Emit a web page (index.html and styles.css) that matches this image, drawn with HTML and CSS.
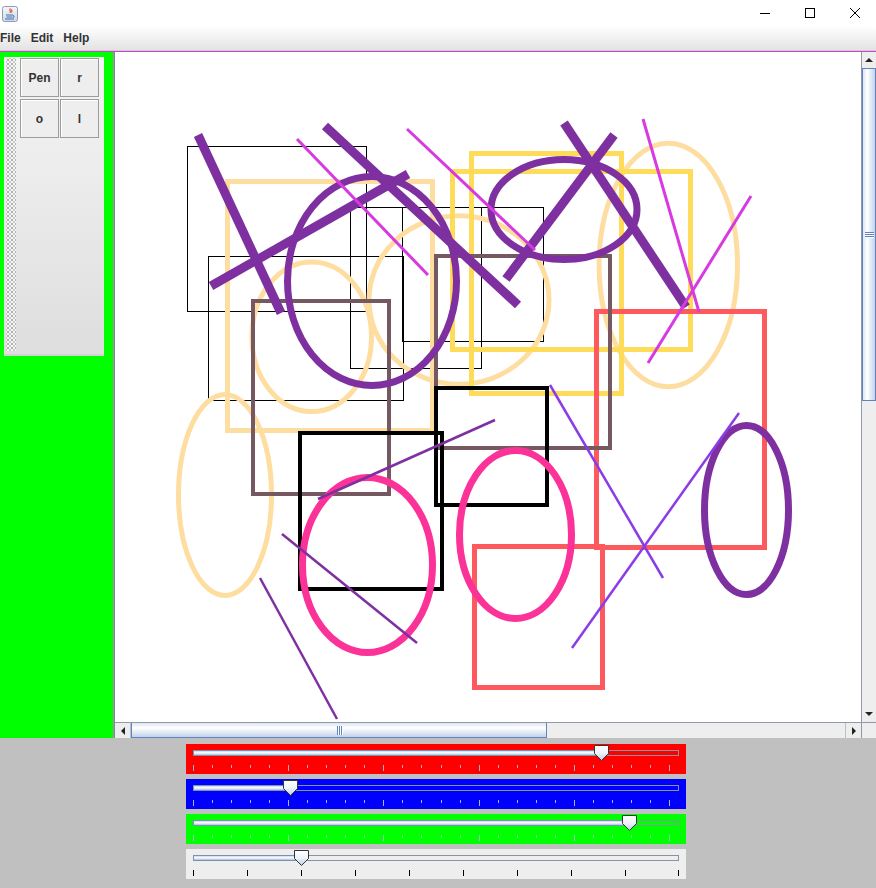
FILE: index.html
```html
<!DOCTYPE html>
<html>
<head>
<meta charset="utf-8">
<title>Paint</title>
<link rel="stylesheet" href="styles.css">
</head>
<body>
<svg class="defs" width="0" height="0">
  <defs>
    <linearGradient id="thumbGrad" x1="0" y1="0" x2="0" y2="1">
      <stop offset="0" stop-color="#ffffff"/>
      <stop offset="0.5" stop-color="#eef3fa"/>
      <stop offset="1" stop-color="#b9cce6"/>
    </linearGradient>
    <linearGradient id="iconGrad" x1="0" y1="0" x2="0" y2="1">
      <stop offset="0" stop-color="#f4f7fb"/>
      <stop offset="1" stop-color="#cfd9e6"/>
    </linearGradient>
    <path id="thumbShape" d="M0.5 0.5H14.5V8.5L7.5 15.5L0.5 8.5Z"/>
  </defs>
</svg>

<div class="titlebar">
  <svg class="app-icon" width="16" height="16" viewBox="0 0 16 16">
    <rect x="0.5" y="0.5" width="15" height="15" rx="2" fill="url(#iconGrad)" stroke="#8e9db3"/>
    <path d="M8.5 2.5c-2 1.5 1 2.5-0.5 4.5M10 3.5c-1 1 0.5 1.5-0.5 3" stroke="#e0542a" stroke-width="1.2" fill="none"/>
    <path d="M4 9h7M4.5 11h6M3 13h9" stroke="#3b6fb6" stroke-width="1" fill="none"/>
    <path d="M11 9.5c1.5 0 1.5 2 0 2" stroke="#3b6fb6" stroke-width="1" fill="none"/>
  </svg>
  <div class="win-controls">
    <svg width="10" height="10" viewBox="0 0 10 10"><path d="M0 5.5H10" stroke="#000" stroke-width="1"/></svg>
    <svg width="10" height="10" viewBox="0 0 10 10"><rect x="0.5" y="0.5" width="9" height="9" fill="none" stroke="#000"/></svg>
    <svg width="10" height="10" viewBox="0 0 10 10"><path d="M0 0L10 10M10 0L0 10" stroke="#000" stroke-width="1"/></svg>
  </div>
</div>

<div class="menubar">
  <span class="menu">File</span>
  <span class="menu">Edit</span>
  <span class="menu">Help</span>
</div>
<div class="accent"></div>

<div class="main">
  <div class="side">
    <div class="toolbar">
      <div class="grip"></div>
      <div class="tools">
        <button class="tool">Pen</button>
        <button class="tool">r</button>
        <button class="tool">o</button>
        <button class="tool">l</button>
      </div>
    </div>
  </div>

  <div class="scrollpane">
    <div class="view-row">
      <div class="canvas">
        <svg class="drawing" width="746" height="670" viewBox="115 52 746 670">
          <g fill="none" stroke-linecap="butt">
            <g stroke="#000" stroke-width="1">
              <rect x="187.5" y="146.5" width="179" height="165"/>
              <rect x="208.5" y="256.5" width="195" height="144"/>
              <rect x="350.5" y="207.5" width="131" height="161"/>
              <rect x="402.5" y="207.5" width="141" height="134"/>
            </g>
            <rect x="227.5" y="181.5" width="205" height="249" stroke="#fedea0" stroke-width="5"/>
            <g stroke="#fedea0" stroke-width="5">
              <ellipse cx="311.7" cy="336.7" rx="59.8" ry="74.8"/>
              <ellipse cx="459" cy="300" rx="90" ry="84.2"/>
              <ellipse cx="668.3" cy="265" rx="69.2" ry="121.8"/>
              <ellipse cx="225" cy="495" rx="46.5" ry="100.5"/>
            </g>
            <g stroke="#ffdb5a" stroke-width="5">
              <rect x="471.5" y="153.5" width="150" height="240"/>
              <rect x="452.5" y="171.5" width="238" height="178"/>
            </g>
            <g stroke="#fe5a5e" stroke-width="5">
              <rect x="596.5" y="311.5" width="168" height="236"/>
              <rect x="474.5" y="546.5" width="128" height="141"/>
            </g>
            <g stroke="#765960" stroke-width="4">
              <rect x="253" y="301" width="136" height="193"/>
              <rect x="436" y="256" width="174" height="192"/>
            </g>
            <g stroke="#000" stroke-width="4">
              <rect x="300" y="433" width="142" height="156"/>
              <rect x="436" y="388" width="111" height="117"/>
            </g>
            <g stroke="#fb3399" stroke-width="7">
              <ellipse cx="367.5" cy="565" rx="65" ry="87.5"/>
              <ellipse cx="515.5" cy="534.5" rx="56" ry="84"/>
            </g>
            <g stroke="#7e30a0" stroke-width="7">
              <ellipse cx="372" cy="281" rx="84.5" ry="104.5"/>
              <ellipse cx="564" cy="209.5" rx="73" ry="50"/>
              <ellipse cx="746.5" cy="510" rx="42" ry="84.5"/>
            </g>
            <g stroke="#7e30a0" stroke-width="9">
              <line x1="198" y1="135" x2="281" y2="313"/>
              <line x1="211" y1="286" x2="408" y2="174"/>
              <line x1="325" y1="126" x2="518" y2="305"/>
              <line x1="564" y1="123" x2="686" y2="307"/>
              <line x1="614" y1="135" x2="506" y2="279"/>
            </g>
            <g stroke="#d63ae0" stroke-width="3">
              <line x1="297" y1="139" x2="428" y2="275"/>
              <line x1="407" y1="129" x2="535" y2="250"/>
              <line x1="643" y1="119" x2="699" y2="312"/>
              <line x1="751" y1="196" x2="648" y2="363"/>
            </g>
            <g stroke="#8a3ce6" stroke-width="2.5">
              <line x1="550" y1="385" x2="663" y2="578"/>
              <line x1="739" y1="413" x2="572" y2="648"/>
            </g>
            <g stroke="#7e30a0" stroke-width="2.5">
              <line x1="495" y1="420" x2="318" y2="499"/>
              <line x1="282" y1="534" x2="417" y2="643"/>
              <line x1="260" y1="578" x2="337" y2="719"/>
            </g>
          </g>
        </svg>
      </div>
      <div class="vscroll">
        <div class="sbtn"><span class="arrow-up"></span></div>
        <div class="vthumb"><span class="grip-h"></span><span class="grip-h"></span><span class="grip-h"></span></div>
        <div class="vtrack"></div>
        <div class="sbtn"><span class="arrow-down"></span></div>
      </div>
    </div>
    <div class="hscroll">
      <div class="hbtn"><span class="arrow-left"></span></div>
      <div class="hthumb"><span class="grip-v"></span><span class="grip-v"></span><span class="grip-v"></span></div>
      <div class="htrack"></div>
      <div class="hbtn right"><span class="arrow-right"></span></div>
      <div class="corner"></div>
    </div>
  </div>
</div>

<div class="controls-panel">
  <div class="slider red">
    <div class="track"><div class="filled" style="width:408px"></div><div class="empty"></div></div>
    <svg class="ticks" width="500" height="7"><use href="#colorTicks"/></svg>
    <svg class="thumb" style="left:408px" width="15" height="16"><use href="#thumbShape" fill="url(#thumbGrad)" stroke="#333"/></svg>
  </div>
  <div class="slider blue">
    <div class="track"><div class="filled" style="width:97px"></div><div class="empty"></div></div>
    <svg class="ticks" width="500" height="7">
      <g id="colorTicks" stroke="#a8b8ca" stroke-width="1">
        <path d="M7.5 0v6M26.5 0v3M45.5 0v3M64.5 0v3M83.5 0v3M102.5 0v6M121.5 0v3M140.5 0v3M159.5 0v3M178.5 0v3M197.5 0v6M216.5 0v3M235.5 0v3M255.5 0v3M274.5 0v3M293.5 0v6M312.5 0v3M331.5 0v3M350.5 0v3M369.5 0v3M388.5 0v6M407.5 0v3M426.5 0v3M445.5 0v3M464.5 0v3M483.5 0v6"/>
      </g>
    </svg>
    <svg class="thumb" style="left:97px" width="15" height="16"><use href="#thumbShape" fill="url(#thumbGrad)" stroke="#333"/></svg>
  </div>
  <div class="slider green">
    <div class="track"><div class="filled" style="width:436px"></div><div class="empty"></div></div>
    <svg class="ticks" width="500" height="7"><use href="#colorTicks"/></svg>
    <svg class="thumb" style="left:436px" width="15" height="16"><use href="#thumbShape" fill="url(#thumbGrad)" stroke="#333"/></svg>
  </div>
  <div class="slider gray">
    <div class="track"><div class="filled" style="width:108px"></div><div class="empty"></div></div>
    <svg class="ticks" width="500" height="7">
      <path d="M7.5 0v6M61.5 0v6M115.5 0v6M169.5 0v6M223.5 0v6M277.5 0v6M331.5 0v6M385.5 0v6M439.5 0v6M492.5 0v6" stroke="#000" stroke-width="1"/>
    </svg>
    <svg class="thumb" style="left:108px" width="15" height="16"><use href="#thumbShape" fill="url(#thumbGrad)" stroke="#333"/></svg>
  </div>
</div>
</body>
</html>
```

FILE: styles.css
```css
* { box-sizing: border-box; }
html, body { margin: 0; padding: 0; }
body {
  width: 876px;
  height: 888px;
  overflow: hidden;
  background: #ffffff;
  font-family: "Liberation Sans", Arial, sans-serif;
}
.defs { position: absolute; width: 0; height: 0; }

/* title bar */
.titlebar {
  height: 26px;
  display: flex;
  align-items: center;
  justify-content: space-between;
  background: #ffffff;
}
.app-icon { margin-left: 2px; margin-top: 1px; display: block; }
.win-controls {
  display: flex;
  align-items: center;
  gap: 35px;
  padding-right: 16px;
  margin-top: 0;
}
.win-controls svg { display: block; }

/* menu bar */
.menubar {
  height: 25px;
  padding-top: 1px;
  display: flex;
  gap: 10px;
  background: linear-gradient(#ffffff, #e3e3e3);
  border-bottom: 1px solid #cdcdcd;
  line-height: 23px;
  font-size: 12px;
  font-weight: bold;
  color: #333333;
}
.accent { height: 1px; background: #c944d0; }

/* main area */
.main { display: flex; height: 686px; }
.side {
  width: 114px;
  background: #00ff00;
  border-right: 1px solid #9a9a9a;
  padding: 5px 0 0 4px;
}
.toolbar {
  width: 100px;
  height: 299px;
  display: flex;
  gap: 4px;
  padding: 1px 0 3px 2px;
  background: linear-gradient(#f5f5f5, #dedede);
  border-bottom: 2px solid #d2d2d2;
}
.grip {
  width: 10px;
  background-color: #f6f6f6;
  background-image:
    radial-gradient(circle, #8a8a8a 0.6px, transparent 0.9px),
    radial-gradient(circle, #b0b0b0 0.6px, transparent 0.9px);
  background-size: 4px 4px, 4px 4px;
  background-position: 0 0, 2px 2px;
}
.tools {
  display: grid;
  grid-template-columns: 39px 39px;
  grid-auto-rows: 39px;
  column-gap: 1px;
  row-gap: 2px;
  align-content: start;
}
.tool {
  margin: 0;
  padding: 0;
  border: 1px solid #9c9c9c;
  background: #eeeeee;
  box-shadow: inset 1px 1px 0 #ffffff;
  font-family: "Liberation Sans", Arial, sans-serif;
  font-size: 12px;
  font-weight: bold;
  color: #333333;
}

.scrollpane {
  width: 762px;
  border-left: 1px solid #7a8a99;
  display: flex;
  flex-direction: column;
}
.view-row { display: flex; height: 670px; }
.canvas { width: 746px; height: 670px; background: #ffffff; overflow: hidden; }
.drawing { display: block; }

/* vertical scrollbar */
.vscroll {
  width: 15px;
  border-left: 1px solid #8f9aa6;
  display: flex;
  flex-direction: column;
  background: #eeeeee;
}
.sbtn {
  height: 16px;
  background: #eeeeee;
  display: flex;
  align-items: center;
  justify-content: center;
}
.arrow-up { width: 0; height: 0; border-left: 4px solid transparent; border-right: 4px solid transparent; border-bottom: 4px solid #222; }
.arrow-down { width: 0; height: 0; border-left: 4px solid transparent; border-right: 4px solid transparent; border-top: 4px solid #222; }
.arrow-left { width: 0; height: 0; border-top: 4px solid transparent; border-bottom: 4px solid transparent; border-right: 4px solid #222; }
.arrow-right { width: 0; height: 0; border-top: 4px solid transparent; border-bottom: 4px solid transparent; border-left: 4px solid #222; }
.vthumb {
  height: 333px;
  border: 1px solid #6382bf;
  background: linear-gradient(90deg, #dbe5f2, #ffffff 35%, #c2d3ea);
  display: flex;
  flex-direction: column;
  align-items: center;
  justify-content: center;
  gap: 1px;
}
.grip-h { width: 9px; height: 1px; background: #6382bf; box-shadow: 0 1px 0 #ffffff; }
.vtrack { flex: 1; background: #eeeeee; }

/* horizontal scrollbar */
.hscroll {
  height: 16px;
  display: flex;
  border-top: 1px solid #8f9aa6;
  background: #eeeeee;
}
.hbtn {
  width: 16px;
  display: flex;
  align-items: center;
  justify-content: center;
  background: #eeeeee;
  border-right: 1px solid #b8c0c8;
}
.hbtn.right { border-right: none; border-left: 1px solid #b8c0c8; width: 16px; }
.hthumb {
  width: 416px;
  border: 1px solid #6382bf;
  border-top: none;
  background: linear-gradient(#dbe5f2, #ffffff 35%, #c2d3ea);
  display: flex;
  align-items: center;
  justify-content: center;
  gap: 1px;
}
.grip-v { width: 1px; height: 9px; background: #6382bf; box-shadow: 1px 0 0 #ffffff; }
.htrack { flex: 1; background: #eeeeee; }
.corner { width: 15px; background: #eeeeee; border-left: 1px solid #8f9aa6; }

/* slider panel */
.controls-panel {
  height: 150px;
  background: #c0c0c0;
  padding: 6px 0 0 186px;
  display: flex;
  flex-direction: column;
  gap: 5px;
}
.slider {
  position: relative;
  width: 500px;
  height: 30px;
  padding-top: 6px;
}
.slider.red { background: #ff0000; }
.slider.blue { background: #0000ff; }
.slider.green { background: #00ff00; }
.slider.gray { background: #eeeeee; }
.track {
  margin-left: 7px;
  width: 486px;
  height: 6px;
  display: flex;
}
.filled {
  height: 6px;
  border: 1px solid #7c90b0;
  border-right: none;
  background: linear-gradient(#c9d6ea, #ffffff 45%, #aac0de);
}
.empty {
  flex: 1;
  height: 6px;
  border: 1px solid #8794a4;
  border-left: none;
}
.ticks { display: block; margin-top: 9px; }
.thumb { position: absolute; top: 1px; display: block; }
```
